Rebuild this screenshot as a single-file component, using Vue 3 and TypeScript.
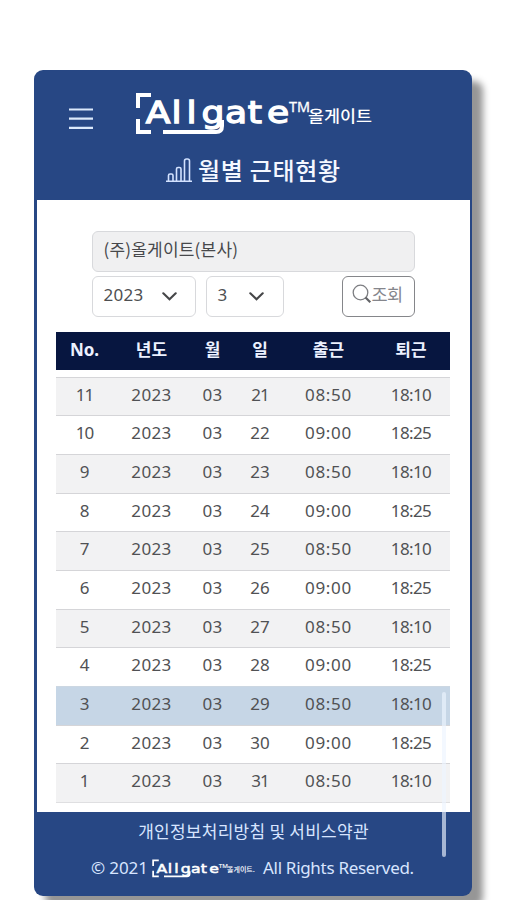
<script setup lang="ts">
interface Attendance {
  no: number
  day: number
  start: string
  end: string
}

const rows: Attendance[] = Array.from({ length: 11 }, (_, i) => ({
  no: 11 - i,
  day: 21 + i,
  start: i % 2 === 0 ? '08:50' : '09:00',
  end: i % 2 === 0 ? '18:10' : '18:25',
}))
const selected = 3
</script>

<template>
  <main class="stage">
    <section class="phone">
      <header class="header">
        <div class="brand-row">
          <svg class="menu" viewBox="0 0 26 22"><path d="M1 1.5H25M1 10.7H25M1 19.9H25" /></svg>
          <svg class="logo" viewBox="0 0 240 46">
            <path class="frame" d="M16 3H3V16M3 27V40H16M28 40H81Q87 40 87 34V28" />
            <text class="word" transform="scale(1.2 1)" y="31.5" x="9 30.5 43 55.5 75 94 110">Allgate</text>
            <text class="tm" x="154" y="20" textLength="21" lengthAdjust="spacingAndGlyphs">TM</text>
            <text class="ko" x="173" y="30" textLength="64" lengthAdjust="spacingAndGlyphs">올게이트</text>
          </svg>
        </div>
        <h1 class="title">
          <svg class="chart" viewBox="0 0 27 25">
            <path d="M0 23.3H26M2.5 23V17.5Q2.5 16 4 16H5.5Q7 16 7 17.5V23M10.5 23V11Q10.5 9.5 12 9.5H13.5Q15 9.5 15 11V23M18.5 23V3Q18.5 1 20.5 1H21.5Q23.5 1 23.5 3V23" />
          </svg>
          <span>월별 근태현황</span>
        </h1>
      </header>

      <div class="content">
        <form class="filters" @submit.prevent>
          <div class="company">(주)올게이트(본사)</div>
          <div class="filter-line">
            <button type="button" class="select year"><span>2023</span>
              <svg viewBox="0 0 15 9"><path d="M1.3 1.3L7.5 7.2L13.7 1.3" /></svg>
            </button>
            <button type="button" class="select month"><span>3</span>
              <svg viewBox="0 0 15 9"><path d="M1.3 1.3L7.5 7.2L13.7 1.3" /></svg>
            </button>
            <button type="submit" class="search">
              <svg viewBox="0 0 20 20"><circle cx="8.5" cy="8.5" r="7.3" /><path d="M13.5 13.5L18.3 18.2" /></svg>
              <span>조회</span>
            </button>
          </div>
        </form>

        <div class="table">
          <div class="row head">
            <span>No.</span><span>년도</span><span>월</span><span>일</span><span>출근</span><span>퇴근</span>
          </div>
          <div class="body">
            <div v-for="r in rows" :key="r.no" class="row" :class="{ selected: r.no === selected }">
              <span :class="{ tight: r.no > 9 }">{{ r.no }}</span>
              <span class="wide">2023</span>
              <span class="wide">03</span>
              <span :class="{ tight: r.day === 21 || r.day === 31 }">{{ r.day }}</span>
              <span class="start">{{ r.start }}</span>
              <span class="end">{{ r.end }}</span>
            </div>
          </div>
        </div>
      </div>

      <footer class="footer">
        <div class="terms">개인정보처리방침 및 서비스약관</div>
        <div class="copyright">
          <span class="c-year">© 2021</span>
          <svg class="logo" viewBox="0 0 240 46">
            <path class="frame" d="M16 3H3V16M3 27V40H16M28 40H81Q87 40 87 34V28" />
            <text class="word" transform="scale(1.2 1)" y="31.5" x="9 30.5 43 55.5 75 94 110">Allgate</text>
            <text class="tm" x="154" y="20" textLength="21" lengthAdjust="spacingAndGlyphs">TM</text>
            <text class="ko" x="173" y="30" textLength="64" lengthAdjust="spacingAndGlyphs">올게이트.</text>
          </svg>
          <span class="rights">All Rights Reserved.</span>
        </div>
      </footer>
      <div class="scrollbar"></div>
    </section>
  </main>
</template>

<style>
body {
  background: #fff;
  overflow: hidden;
}
</style>

<style scoped>
* {
  box-sizing: border-box;
}
.stage {
  height: 900px;
  padding: 70px 0 0 34px;
  overflow: hidden;
  font-family: "Noto Sans", "Noto Sans CJK KR", sans-serif;
}
.phone {
  position: relative;
  display: flex;
  flex-direction: column;
  width: 438px;
  height: 826px;
  padding: 0 2px 0 3px;
  border-radius: 9px;
  background: #274784;
  box-shadow: 11px 11px 7px 0 #969696;
}
.header {
  height: 129.5px;
  color: #f4f7ff;
}
.brand-row {
  display: flex;
  height: 80px;
  padding: 22px 0 0 31px;
}
.menu {
  width: 26px;
  height: 22px;
  margin-top: 16px;
}
.menu path {
  stroke: #dce9fb;
  stroke-width: 2.2;
}
.logo {
  display: block;
  width: 240px;
  height: 46px;
  margin-left: 40.5px;
  overflow: visible;
}
.frame {
  fill: none;
  stroke: #fff;
  stroke-width: 4;
}
.logo text {
  fill: #fff;
}
.logo .word {
  font: 400 30px "DejaVu Sans", sans-serif;
  stroke: #fff;
  stroke-width: 1.3;
}
.logo .tm {
  font: 400 14px "Noto Sans", sans-serif;
  stroke: #fff;
  stroke-width: 0.3;
}
.logo .ko {
  font: 500 16px "Noto Sans CJK KR", sans-serif;
}
.title {
  display: flex;
  margin: 0;
  padding: 2px 0 0 129px;
  font: 500 24px/35px "Noto Sans CJK KR", sans-serif;
}
.title span {
  margin-left: 5px;
  letter-spacing: 0.7px;
  white-space: nowrap;
}
.chart {
  width: 27px;
  height: 25px;
  margin-top: 6px;
}
.chart path {
  fill: none;
  stroke: #d3e2ff;
  stroke-width: 1.6;
}
.content {
  height: 612.5px;
  padding: 31px 20px 0 19px;
  background: #fff;
}
.filters {
  width: 323px;
  margin-left: 35.5px;
}
.company {
  height: 41px;
  padding-left: 11px;
  border: 1.5px solid #d8d9dc;
  border-radius: 6px;
  background: #f0f0f1;
  color: #47484b;
  font: 400 17px/34px "Noto Sans CJK KR", sans-serif;
  letter-spacing: 0.2px;
}
.filter-line {
  display: flex;
  margin-top: 4px;
}
button {
  display: flex;
  align-items: center;
  height: 41px;
  padding: 0 0 4px 11px;
  border: 1.5px solid #d8d9dc;
  border-radius: 6px;
  background: #fff;
  font-family: "Noto Sans", "Noto Sans CJK KR", sans-serif;
  font-size: 17px;
  color: #4e4f52;
}
.year {
  width: 104px;
  letter-spacing: 0.3px;
}
.month {
  width: 78px;
  margin-left: 10px;
}
.select svg {
  width: 15px;
  height: 9px;
  margin: 4px 0 0 18px;
}
.month svg {
  margin-left: 22px;
}
.select path {
  fill: none;
  stroke: #454648;
  stroke-width: 2.1;
  stroke-linecap: round;
}
.search {
  width: 73px;
  margin-left: auto;
  padding-left: 9px;
  border-color: #85868a;
  color: #85868c;
}
.search svg {
  width: 20px;
  height: 20px;
  flex: none;
}
.search circle {
  fill: none;
  stroke: #7d7e82;
  stroke-width: 1.3;
}
.search path {
  stroke: #626367;
  stroke-width: 2.2;
}
.search span {
  font: 400 17.5px/20px "Noto Sans CJK KR", sans-serif;
  white-space: nowrap;
  letter-spacing: -0.5px;
}
.table {
  width: 394px;
  margin-top: 15px;
}
.row {
  display: grid;
  grid-template-columns: 57px 77px 45px 50px 87px 78px;
  height: 38.7px;
  border-top: 1.5px solid #d5d5d8;
  color: #505154;
  font-size: 17px;
  line-height: 33px;
  text-align: center;
}
.row:nth-child(odd) {
  background: #f2f2f3;
}
.row.head {
  height: 38px;
  border: 0;
  background: #071640;
  color: #ecf1ff;
  font-weight: 700;
  line-height: 35px;
}
.body {
  margin-top: 7px;
  border-bottom: 1.5px solid #dfdfe1;
}
.row.selected {
  background: #c6d6e6;
  border-color: #ccd7e2;
}
.wide {
  letter-spacing: 0.35px;
}
.tight {
  letter-spacing: -1px;
}
.start {
  letter-spacing: 0.7px;
}
.end {
  letter-spacing: -0.6px;
}
.footer {
  flex: 1;
  color: #d8e5ff;
}
.terms {
  height: 38px;
  text-align: center;
  font: 400 17px/38px "Noto Sans CJK KR", sans-serif;
  letter-spacing: 0.25px;
}
.copyright {
  display: flex;
  align-items: center;
  height: 34px;
  padding-left: 54px;
  font-size: 17px;
  white-space: nowrap;
}
.c-year {
  width: 58px;
  letter-spacing: -0.1px;
}
.copyright .logo {
  width: 106px;
  height: 20px;
  margin: 3px 0 0 2px;
}
.rights {
  margin-left: 6px;
  letter-spacing: -0.3px;
}
.scrollbar {
  position: absolute;
  left: 408px;
  top: 622px;
  width: 4px;
  height: 165px;
  border-radius: 2px;
  background: rgba(237, 244, 255, 0.65);
}
</style>
